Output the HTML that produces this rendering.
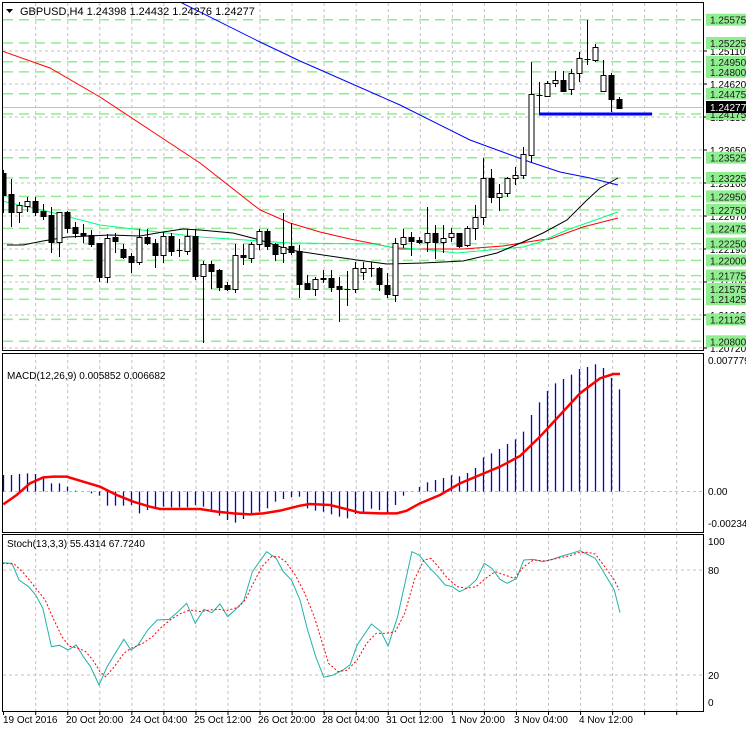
<!DOCTYPE html>
<html><head><meta charset="utf-8"><style>
html,body{margin:0;padding:0;background:#fff;}
body{width:746px;height:731px;overflow:hidden;position:relative;font-family:"Liberation Sans",sans-serif;}
svg text{font-family:"Liberation Sans",sans-serif;font-size:10px;}
</style></head><body>
<svg id="s" width="746" height="731" xmlns="http://www.w3.org/2000/svg">
<defs>
<clipPath id="cm"><rect x="3" y="3" width="700" height="347"/></clipPath>
<clipPath id="cd"><rect x="3" y="355" width="700" height="177"/></clipPath>
<clipPath id="cs"><rect x="3" y="536" width="700" height="175"/></clipPath>
</defs>
<g id="grid"></g>
<g id="main" clip-path="url(#cm)"></g>
<g id="macd" clip-path="url(#cd)"></g>
<g id="stoch" clip-path="url(#cs)"></g>
<g fill="none" stroke="#000" stroke-width="1">
<rect x="2.5" y="2.5" width="701" height="348"/>
<rect x="2.5" y="353.5" width="701" height="179"/>
<rect x="2.5" y="534.5" width="701" height="177"/>
</g>
<g id="axis"></g>
<text x="20" y="15" font-size="11" style="font-size:11px">GBPUSD,H4  1.24398 1.24432 1.24276 1.24277</text>
<path d="M6 9 L13 9 L9.5 13 Z" fill="#000"/>
<text x="7" y="379">MACD(12,26,9) 0.005852 0.006682</text>
<text x="7" y="547">Stoch(13,3,3) 55.4314 67.7240</text>
<g id="labels"></g>
</svg>
<script>
const NS="http://www.w3.org/2000/svg";
function el(p,t,a,txt){const e=document.createElementNS(NS,t);for(const k in a)e.setAttribute(k,a[k]);if(txt!==undefined)e.textContent=txt;document.getElementById(p).appendChild(e);return e;}
// vertical grid
for(let i=0;i<21;i++){const x=35.7+i*32.05;
 [[3,350],[354,532],[535,711]].forEach(r=>el('grid','line',{x1:x,x2:x,y1:r[0],y2:r[1],stroke:'#c0c0c0','stroke-dasharray':'3,3'}));
}
// horizontal gray grid in main
const gp=[[51,'1.25110'],[84,'1.24620'],[117,'1.24130'],[150,'1.23650'],[183,'1.23160'],[216,'1.22670'],[249,'1.22190'],[282,'1.21700'],[315,'1.21210'],[348,'1.20720']];
gp.forEach(g=>{el('grid','line',{x1:3,x2:703,y1:g[0],y2:g[0],stroke:'#c0c0c0','stroke-dasharray':'3,3'});
 el('labels','line',{x1:703,x2:707,y1:g[0],y2:g[0],stroke:'#000'});
 el('labels','text',{x:710,y:g[0]+4},g[1]);});
// macd zero, stoch 80/20
el('grid','line',{x1:3,x2:703,y1:491.5,y2:491.5,stroke:'#c0c0c0','stroke-dasharray':'3,3'});
el('grid','line',{x1:3,x2:703,y1:570,y2:570,stroke:'#c0c0c0','stroke-dasharray':'3,3'});
el('grid','line',{x1:3,x2:703,y1:675,y2:675,stroke:'#c0c0c0','stroke-dasharray':'3,3'});
// green levels
const gl=[[19.7,'1.25575'],[43,'1.25225'],[61.8,'1.24950'],[71.9,'1.24800'],[93.8,'1.24475'],[114,'1.24175'],[157.7,'1.23525'],[177.9,'1.23225'],[196.4,'1.22950'],[209.9,'1.22750'],[228.4,'1.22475'],[243.6,'1.22250'],[260.4,'1.22000'],[275.6,'1.21775'],[289,'1.21575'],[299.2,'1.21425'],[319.4,'1.21125'],[341.3,'1.20800']];
gl.forEach(g=>{el('grid','line',{x1:3,x2:703,y1:g[0],y2:g[0],stroke:'#90ee90','stroke-width':1.5,'stroke-dasharray':'10,6'});});
// current price line
el('main','line',{x1:3,x2:703,y1:107.5,y2:107.5,stroke:'#c0c0c0'});
// MAs
function pl(g,pts,c,w,da){el(g,'polyline',{points:pts.map(p=>p.join(',')).join(' '),fill:'none',stroke:c,'stroke-width':w||1,'stroke-dasharray':da||'none'});}
pl('main',[[180,2],[260,42],[300,61],[400,105],[470,140],[530,162],[560,172],[590,178],[618,185]],'#0000ff');
pl('main',[[2,51],[50,68],[100,97],[150,130],[200,163],[260,210],[290,223],[320,232],[350,239],[390,247],[400,249],[463,249],[503,246],[540,240],[550,239],[583,227],[618,218]],'#ff0000');
pl('main',[[2,201],[50,212],[100,225],[200,237],[290,243],[373,244],[390,247],[430,250],[457,253],[490,250],[523,247],[540,242],[567,230],[618,212]],'#00ff7f');
pl('main',[[7,245],[23,245],[43,241],[67,237],[110,235],[140,236],[163,232],[183,229],[200,230],[233,233],[260,240],[290,250],[323,255],[357,260],[387,264],[423,263],[463,261],[497,253],[523,242],[543,233],[567,220],[587,200],[600,188],[618,178]],'#000');
// candles
const C=[[173,195,170,213,'b'],[194,212,179,227,'b'],[205,212,202,223,'w'],[201,206,197,212,'w'],[201,212,197,216,'b'],[211,216,204,220,'b'],[215,242,207,253,'b'],[212,242,212,257,'w'],[212,228,211,233,'b'],[227,233,222,238,'b'],[233,235,224,243,'b'],[235,244,230,247,'b'],[243,277,243,282,'b'],[238,277,234,283,'w'],[237,241,233,253,'b'],[249,257,244,259,'b'],[256,262,253,273,'b'],[237,262,229,265,'w'],[237,243,229,245,'b'],[243,255,239,268,'b'],[236,255,232,263,'w'],[236,251,233,256,'b'],[250,250,239,257,'d'],[236,251,229,255,'w'],[236,276,229,280,'b'],[264,276,261,343,'w'],[264,271,261,289,'b'],[270,287,269,291,'b'],[285,289,282,291,'b'],[255,289,244,293,'w'],[255,257,244,265,'b'],[244,258,242,263,'w'],[231,244,229,250,'w'],[231,246,229,250,'b'],[244,254,243,261,'b'],[247,253,213,263,'w'],[246,252,223,255,'b'],[251,284,245,298,'b'],[283,289,275,290,'b'],[279,289,277,296,'w'],[278,279,270,283,'b'],[278,287,270,292,'b'],[286,289,277,322,'b'],[289,289,271,306,'d'],[268,289,262,293,'w'],[268,272,262,280,'w'],[268,268,262,277,'d'],[268,284,267,291,'b'],[285,294,273,298,'b'],[243,295,238,302,'w'],[237,244,229,248,'w'],[237,241,232,256,'b'],[240,242,237,244,'b'],[233,242,207,252,'w'],[233,242,225,259,'b'],[238,242,225,253,'w'],[233,237,228,242,'w'],[233,246,233,248,'b'],[228,245,226,247,'w'],[217,228,205,240,'w'],[178,217,158,225,'w'],[178,197,169,203,'b'],[193,197,184,211,'w'],[178,193,177,197,'w'],[175,178,167,185,'w'],[154,175,147,179,'w'],[94,155,62,162,'w'],[95,95,82,115,'d'],[83,96,81,97,'w'],[80,83,71,87,'w'],[80,91,71,92,'b'],[73,89,69,95,'w'],[58,73,52,82,'w'],[59,59,20,65,'d'],[47,60,44,62,'w'],[75,91,60,92,'w'],[75,99,73,112,'b'],[99,108,97,108,'b']];
const n=C.length;
C.forEach((c,i)=>{const x=619-8*(n-1-i)+0.5;
 el('main','line',{x1:x,x2:x,y1:c[2],y2:c[3],stroke:'#000'});
 if(c[4]=='d'){el('main','line',{x1:x-3,x2:x+3,y1:c[0]+0.5,y2:c[0]+0.5,stroke:'#000'});}
 else el('main','rect',{x:x-2.5,y:c[0]+0.5,width:5,height:Math.max(1,c[1]-c[0]),fill:c[4]=='b'?'#000':'#fff',stroke:'#000'});
});
el('main','line',{x1:539,x2:652,y1:114,y2:114,stroke:'#0000ff','stroke-width':3});
// macd hist
const h1=[405,405,402,400,402,410,430,430,440,452,455,460,467,497,497,497,495,520,510,507,500,502,502,502,495,500,510,527,540,548,537,522,515,505,485,477,472,470].map(v=>340+v/3);
const h2=[475,482,485,493,500,505,492,485,476,480,490,465,437,425,411,397,390,384,376,379,369,354,322,310,297,282,268,245,195,157,123,100,87,74,57,51,43,54,84,118].map(v=>350+v/3);
const H=h1.concat(h2);
H.forEach((y,i)=>{const x=619-8*(n-1-i)+0.5;el('macd','line',{x1:x,x2:x,y1:491.5,y2:y,stroke:'#0000d0','stroke-width':1.3});});
const m1=[[10,493],[50,465],[90,430],[130,412],[160,410],[200,410],[250,425],[300,440],[350,465],[400,485],[450,500],[480,507],[600,507],[650,515],[700,520],[750,523],[790,520],[840,512],[900,497]].map(p=>[p[0]/3,340+p[1]/3]);
const m2=[[0,467],[30,462],[90,465],[130,475],[180,488],[240,490],[290,490],[320,482],[360,460],[420,435],[480,400],[540,375],[600,350],[660,318],[720,260],[780,195],[840,130],[900,85],[940,72],[960,72]].map(p=>[300+p[0]/3,350+p[1]/3]);
pl('macd',m1.concat(m2),'#ff0000',2.5);
// stoch
const sm=[[5,128],[25,130],[40,180],[60,200],[75,225],[90,265],[108,380],[125,376],[143,390],[160,375],[175,410],[190,440],[208,495],[225,440],[242,400],[260,358],[275,390],[290,375],[310,330],[330,300],[355,298],[370,280],[392,250],[410,310],[428,268],[445,278],[462,252],[478,290],[495,268],[512,242],[530,155],[560,95],[580,115],[595,155],[612,180],[630,240],[645,325],[663,410],[680,472],[700,465],[720,450],[735,435],[750,375],[780,312],[800,335],[815,378],[835,290],[865,95],[880,105],[900,140],[920,170],[935,195],[950,200],[965,215],[980,205],[1000,180],[1017,130],[1033,145],[1050,178],[1065,190],[1085,175],[1100,120],[1120,118],[1140,125],[1160,118],[1180,108],[1200,100],[1218,92],[1232,102],[1250,115],[1265,150],[1290,210],[1302,278]].map(p=>[p[0]/2.1,520+p[1]/3]);
const ss=[[5,130],[30,132],[50,160],[70,195],[95,240],[110,290],[130,350],[145,378],[165,385],[180,395],[195,420],[210,455],[222,470],[240,440],[260,400],[275,385],[300,370],[320,350],[340,320],[360,297],[380,280],[400,270],[420,275],[440,270],[460,268],[475,272],[500,262],[515,240],[530,195],[550,140],[570,110],[585,110],[600,125],[620,165],[640,220],[660,290],[675,360],[690,430],[710,455],[730,450],[750,420],[770,370],[790,340],[810,340],[830,335],[850,280],[870,180],[890,120],[905,115],[920,140],[940,175],[960,200],[980,205],[1000,200],[1020,175],[1040,155],[1060,165],[1080,175],[1100,140],[1120,120],[1145,123],[1170,115],[1195,108],[1215,98],[1235,97],[1250,102],[1270,140],[1290,180],[1300,210]].map(p=>[p[0]/2.1,520+p[1]/3]);
pl('stoch',sm,'#20b2aa',1);
pl('stoch',ss,'#ff0000',1,'2,2');
// green labels on top
gl.forEach(g=>{el('labels','rect',{x:706,y:g[0]-6,width:40,height:12,fill:'#90ee90'});
 el('labels','text',{x:710,y:g[0]+4,fill:'#1a1a1a'},g[1]);});
el('labels','rect',{x:706,y:101,width:40,height:12,fill:'#000'});
el('labels','text',{x:710,y:111,fill:'#fff'},'1.24277');
// macd / stoch axis labels
[[364,'0.007779'],[495,'0.00'],[527,'-0.002341']].forEach(t=>{el('labels','text',{x:708,y:t[0]},t[1]);});
[[545,'100'],[574,'80'],[679,'20'],[706,'0']].forEach(t=>{el('labels','text',{x:708,y:t[0]},t[1]);});
// time axis
const tl=[[3,'19 Oct 2016'],[66,'20 Oct 20:00'],[130,'24 Oct 04:00'],[194,'25 Oct 12:00'],[258,'26 Oct 20:00'],[322,'28 Oct 04:00'],[386,'31 Oct 12:00'],[451,'1 Nov 20:00'],[514,'3 Nov 04:00'],[579,'4 Nov 12:00']];
tl.forEach(t=>el('labels','text',{x:t[0],y:723},t[1]));
for(let i=0;i<21;i++){const x=35.7+i*32.05;el('labels','line',{x1:x,x2:x,y1:711,y2:715,stroke:'#000'});}
el('labels','line',{x1:3.5,x2:3.5,y1:711,y2:715,stroke:'#000'});
</script>
</body></html>
